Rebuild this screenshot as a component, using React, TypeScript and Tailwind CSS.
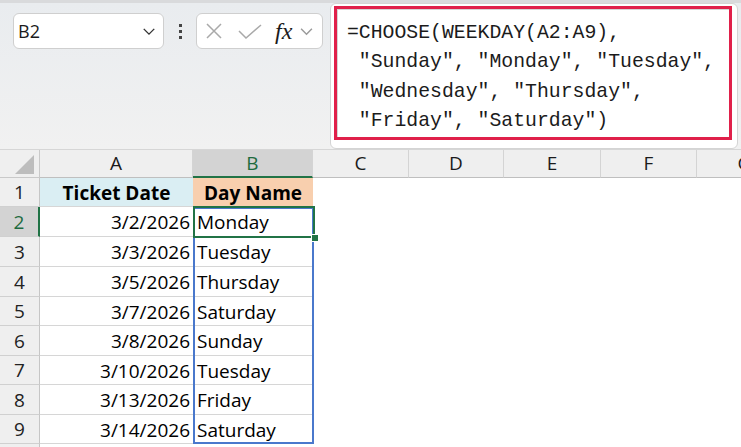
import React from "react"

const cols = [
  { key: "A", w: "w-[153px]" },
  { key: "B", w: "w-[120px]" },
  { key: "C", w: "w-[96px]" },
  { key: "D", w: "w-[95px]" },
  { key: "E", w: "w-[97px]" },
  { key: "F", w: "w-[96px]" },
  { key: "G", w: "w-[96px]" },
]

const rows = [
  { n: 1, h: "h-[29px]", a: "Ticket Date", b: "Day Name" },
  { n: 2, h: "h-[30px]", a: "3/2/2026", b: "Monday" },
  { n: 3, h: "h-[30px]", a: "3/3/2026", b: "Tuesday" },
  { n: 4, h: "h-[30px]", a: "3/5/2026", b: "Thursday" },
  { n: 5, h: "h-[29px]", a: "3/7/2026", b: "Saturday" },
  { n: 6, h: "h-[30px]", a: "3/8/2026", b: "Sunday" },
  { n: 7, h: "h-[29px]", a: "3/10/2026", b: "Tuesday" },
  { n: 8, h: "h-[30px]", a: "3/13/2026", b: "Friday" },
  { n: 9, h: "h-[29px]", a: "3/14/2026", b: "Saturday" },
]

const formula = [
  "=CHOOSE(WEEKDAY(A2:A9),",
  ' "Sunday", "Monday", "Tuesday",',
  ' "Wednesday", "Thursday",',
  ' "Friday", "Saturday")',
]

function Chevron({ className }: { className: string }) {
  return (
    <svg viewBox="0 0 16 10" className={className} fill="none" stroke="currentColor" strokeWidth="1.6">
      <path d="M2 2l6 6 6-6" />
    </svg>
  )
}

function TopBar() {
  return (
    <div className="flex h-[150px] border-t-[3px] border-t-[#d9dadc] border-b border-b-[#d6d6d6] bg-gradient-to-b from-[#e9ecef] to-[#f1f1f1]">
      <div className="flex items-start pl-[13px] pt-[10px]">
        {/* Name box */}
        <div className="flex h-[36px] w-[151px] items-center justify-between rounded-md border border-[#cfcfcf] bg-white pl-[4px] pr-[7px]">
          <span className="text-[18px] text-[#1b1b1b]">B2</span>
          <Chevron className="h-[9px] w-[14px] text-[#333]" />
        </div>
        {/* dots */}
        <div className="flex h-[36px] w-[32px] flex-col items-center justify-center gap-[3px]">
          <span className="h-[3px] w-[3px] bg-[#444]" />
          <span className="h-[3px] w-[3px] bg-[#444]" />
          <span className="h-[3px] w-[3px] bg-[#444]" />
        </div>
        {/* cancel / enter / fx */}
        <div className="flex h-[36px] w-[127px] items-center rounded-md border border-[#cfcfcf] bg-white pl-[8px]">
          <svg viewBox="0 0 18 16" className="h-[16px] w-[18px] text-[#a9a9a9]" fill="none" stroke="currentColor" strokeWidth="1.5">
            <path d="M2 1l14 14M16 1L2 15" />
          </svg>
          <svg viewBox="0 0 24 15" className="ml-[15px] h-[15px] w-[24px] text-[#a9a9a9]" fill="none" stroke="currentColor" strokeWidth="1.5">
            <path d="M1 7l7 7L23 1" />
          </svg>
          <span className="ml-[13px] font-['Liberation_Serif',serif] text-[24px] italic leading-none text-[#1b1b1b]">fx</span>
          <Chevron className="ml-[7px] h-[9px] w-[15px] text-[#9a9a9a]" />
        </div>
      </div>
      {/* formula box */}
      <div className="ml-[7px] w-[408px] rounded-md border border-[#d4d4d4] bg-white pl-[3px] pt-[2px]">
        <div className="h-[134px] w-[398px] border-[3px] border-[#e0204a] pl-[10px] pt-[10px] shadow-[inset_1px_1px_0_#d4d4d4]">
          {formula.map((line, i) => (
            <div key={i} className="h-[29.3px] whitespace-pre font-['Liberation_Mono',monospace] text-[19.8px] leading-[29.3px] text-[#1b1b1b]">
              {line}
            </div>
          ))}
        </div>
      </div>
    </div>
  )
}

function HeaderRow() {
  return (
    <div className="flex h-[28px]">
      <div className="relative w-[40px] shrink-0 border-r border-b border-[#c9c9c9] bg-[#efefef]">
        <svg viewBox="0 0 20 20" className="absolute right-[5px] bottom-[3px] h-[19px] w-[19px]">
          <path d="M20 0L20 20L0 20Z" fill="#bdbdbd" />
        </svg>
      </div>
      {cols.map((c) => {
        const sel = c.key === "B"
        return (
          <div
            key={c.key}
            className={`${c.w} flex shrink-0 items-center justify-center border-r border-r-[#d4d4d4] ${
              sel ? "border-b-2 border-b-[#217346] bg-[#d3d3d3] text-[#1e6b3f]" : "border-b border-b-[#bfbfbf] bg-[#efefef] text-[#1b1b1b]"
            } text-[19px]`}
          >
            {c.key}
          </div>
        )
      })}
    </div>
  )
}

function DataRow({ r }: { r: (typeof rows)[number] }) {
  const first = r.n === 1
  const active = r.n === 2
  return (
    <div className={`flex ${r.h}`}>
      <div
        className={`flex w-[40px] shrink-0 items-center justify-center border-b border-b-[#d0d0d0] pt-[1px] text-[19px] ${
          active ? "border-r-2 border-r-[#217346] bg-[#d3d3d3] text-[#1e6b3f]" : "border-r border-r-[#c6c6c6] bg-[#efefef] text-[#222]"
        }`}
      >
        {r.n}
      </div>
      <div
        className={`flex w-[153px] shrink-0 items-center border-b border-b-[#d6d6d6] pt-[2px] ${
          first ? "justify-center bg-[#daeef3] font-bold" : "justify-end pr-[3px]"
        } text-[19px] text-black`}
      >
        {r.a}
      </div>
      <div
        className={`flex w-[120px] shrink-0 items-center border-b border-b-[#d6d6d6] pt-[2px] ${
          first ? "justify-center bg-[#f8cfae] font-bold" : "pl-[4px]"
        } text-[19px] text-black`}
      >
        {r.b}
      </div>
      <div className="flex-1 bg-white" />
    </div>
  )
}

export default function App() {
  return (
    <div className="h-[447px] w-[741px] overflow-hidden bg-white font-['Open_Sans',sans-serif]">
      <TopBar />
      <div className="relative">
        <HeaderRow />
        {rows.map((r) => (
          <DataRow key={r.n} r={r} />
        ))}
        {/* partial row 10 */}
        <div className="flex h-[29px]">
          <div className="w-[40px] shrink-0 border-r border-r-[#c6c6c6] bg-[#efefef]" />
          <div className="flex-1 bg-white" />
        </div>
        {/* selected range B2:B9 */}
        <div className="pointer-events-none absolute top-[57px] left-[193px] h-[237px] w-[121px] border-2 border-[#4a78cc]" />
        {/* active cell B2 */}
        <div className="pointer-events-none absolute top-[56px] left-[193px] h-[32px] w-[122px] border-2 border-[#217346]" />
        <div className="pointer-events-none absolute top-[84px] left-[311px] h-[8px] w-[8px] border border-white bg-[#217346]" />
      </div>
    </div>
  )
}
